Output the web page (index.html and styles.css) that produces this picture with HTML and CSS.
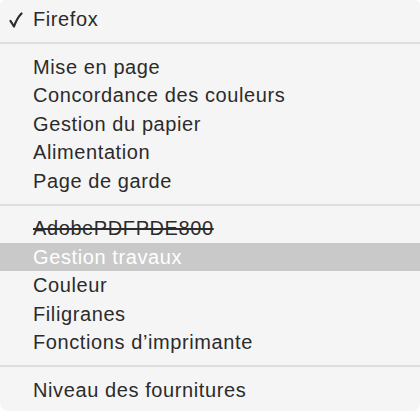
FILE: index.html
```html
<!DOCTYPE html>
<html lang="fr">
<head>
    <meta charset="UTF-8">
    <meta name="viewport" content="width=device-width, initial-scale=1.0">
    <title>Menu imprimante</title>
    <link rel="stylesheet" href="styles.css">
</head>
<body>
    <ul class="menu">
        <li class="item checked">
            <svg class="check" width="14" height="16" viewBox="0 0 14 16"><path d="M1.5 9 L5 14.5 Q8 6 12.5 1.5" fill="none" stroke="#2b2b2b" stroke-width="2.2" stroke-linecap="round" stroke-linejoin="round"/></svg>Firefox
        </li>
        <li class="sep"></li>
        <li class="item">Mise en page</li>
        <li class="item">Concordance des couleurs</li>
        <li class="item">Gestion du papier</li>
        <li class="item">Alimentation</li>
        <li class="item">Page de garde</li>
        <li class="sep"></li>
        <li class="item struck">AdobePDFPDE800</li>
        <li class="item selected">Gestion travaux</li>
        <li class="item">Couleur</li>
        <li class="item">Filigranes</li>
        <li class="item">Fonctions d’imprimante</li>
        <li class="sep"></li>
        <li class="item">Niveau des fournitures</li>
    </ul>
</body>
</html>
```

FILE: styles.css
```css
body {
    margin: 0;
    background: #ffffff;
    font-family: "Liberation Sans", Arial, sans-serif;
}
.menu {
    list-style: none;
    margin: 0;
    padding: 5px 0 7px;
    height: 411px;
    box-sizing: border-box;
    background: #f5f5f5;
    border-radius: 5px 5px 8px 8px;
}
.item {
    position: relative;
    height: 28.5px;
    line-height: 28.5px;
    padding-left: 33px;
    font-size: 20px;
    letter-spacing: 0.6px;
    color: #2b2b2b;
    white-space: nowrap;
}
.check {
    position: absolute;
    left: 9px;
    top: 7px;
}
.struck {
    text-decoration: line-through;
    text-decoration-thickness: 2px;
}
.selected {
    background: #c9c9c9;
    color: #ffffff;
}
.sep {
    height: 19px;
    display: flex;
    align-items: center;
}
.sep::before {
    content: "";
    flex: 1;
    height: 2px;
    background: #dedede;
}
```
